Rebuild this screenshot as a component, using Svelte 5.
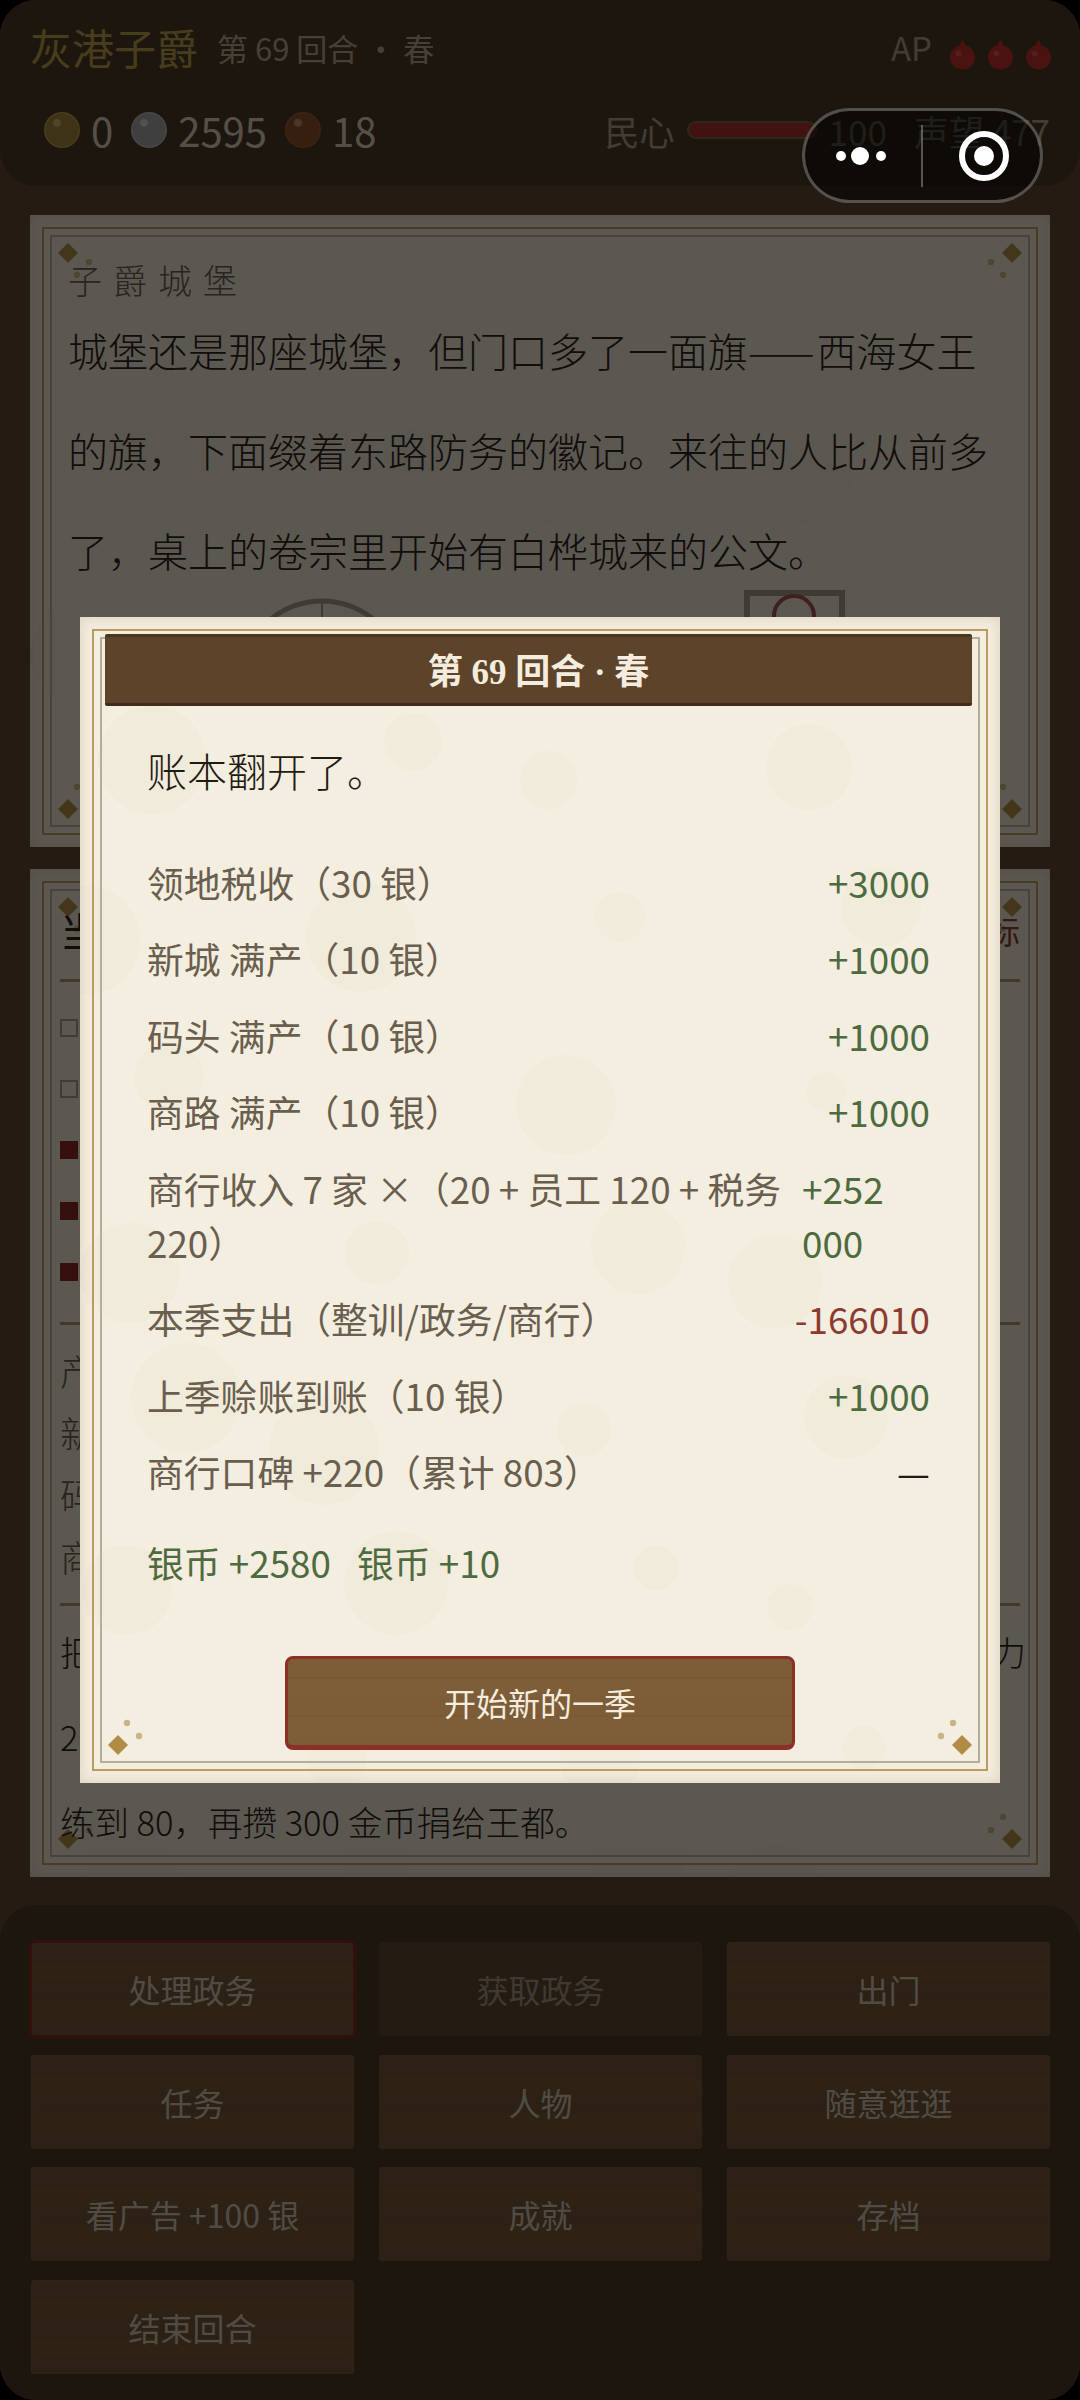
<script>
	const blots = [
		[152, 760, 54], [413, 742, 29], [549, 780, 29], [809, 767, 43], [361, 937, 55], [620, 917, 25],
		[881, 907, 40], [85, 940, 55], [169, 1077, 35], [566, 1105, 50], [826, 1092, 20], [130, 1273, 50],
		[377, 1253, 32], [638, 1247, 47], [775, 1282, 47], [186, 1398, 55], [324, 1450, 55], [584, 1430, 27],
		[846, 1417, 42], [396, 1583, 52], [656, 1568, 22], [790, 1607, 23], [127, 1590, 45], [864, 1747, 22],
		[337, 1760, 30], [600, 1760, 40]
	];
	const modalBlots = blots.map(([x, y, r]) => [x - 80, y - 617, r]);
	const card1Blots = blots.slice(0, 12).map(([x, y, r]) => [x - 30, y - 500, r]);
	const card2Blots = blots.slice(8).map(([x, y, r]) => [x - 30, y - 260, r]);

	const ledger = [
		{ label: '领地税收（30 银）', value: '+3000', tone: 'up' },
		{ label: '新城 满产（10 银）', value: '+1000', tone: 'up' },
		{ label: '码头 满产（10 银）', value: '+1000', tone: 'up' },
		{ label: '商路 满产（10 银）', value: '+1000', tone: 'up' },
		{ label: '商行收入 7 家 ×（20 + 员工 120 + 税务 220）', value: '+252 000', tone: 'up', wrap: true },
		{ label: '本季支出（整训/政务/商行）', value: '-166010', tone: 'down' },
		{ label: '上季赊账到账（10 银）', value: '+1000', tone: 'up' },
		{ label: '商行口碑 +220（累计 803）', value: '—', tone: 'flat' }
	];

	const actions = [
		{ label: '处理政务', hot: true },
		{ label: '获取政务', off: true },
		{ label: '出门' },
		{ label: '任务' },
		{ label: '人物' },
		{ label: '随意逛逛' },
		{ label: '看广告 +100 银' },
		{ label: '成就' },
		{ label: '存档' },
		{ label: '结束回合' }
	];

	const goals = [false, false, true, true, true];
	const coins = [
		{ kind: 'gold', n: 0 },
		{ kind: 'silver', n: 2595 },
		{ kind: 'copper', n: 18 }
	];
	const corners = ['tl', 'tr', 'bl', 'br'];
</script>

{#snippet paper(list)}
	<div class="blots" aria-hidden="true">
		{#each list as [x, y, r]}
			<span style="left: {x - r}px; top: {y - r}px; width: {r * 2}px; height: {r * 2}px"></span>
		{/each}
	</div>
	<i class="line-a"></i>
	<i class="line-b"></i>
	{#each corners as c}
		<svg class="corner {c}" width="80" height="80" viewBox="0 0 80 80" aria-hidden="true">
			<path d="M38 28l10 10-10 10-10-10z" fill="#b08c45" />
			<circle cx="47" cy="60" r="3.2" fill="#c9b48a" />
			<circle cx="59" cy="47" r="3.2" fill="#c9b48a" />
		</svg>
	{/each}
{/snippet}

<div class="page">
	<header class="top">
		<div class="top-a">
			<h1>灰港子爵</h1>
			<span class="turn">第 69 回合 · 春</span>
			<span class="ap">AP</span>
			<div class="drops">
				{#each [0, 1, 2] as i (i)}
					<svg width="27" height="32" viewBox="0 0 27 32">
						<path d="M13.5 1L16.5 7.4C22 8.6 26 13.4 26 19 26 26 20.5 31.5 13.5 31.5S1 26 1 19C1 13.4 5 8.6 10.5 7.4z" fill="#bf3029" />
						<circle cx="9.5" cy="15.5" r="3" fill="#d5574c" />
					</svg>
				{/each}
			</div>
		</div>
		<div class="top-b">
			{#each coins as c}
				<i class="coin {c.kind}"></i><span class="num">{c.n}</span>
			{/each}
			<span class="grow"></span>
			<span class="stat">民心</span>
			<span class="bar"><i></i></span>
			<span class="stat wide">100</span>
			<span class="stat far">声望 477</span>
		</div>
	</header>

	<main>
		<section class="card first">
			{@render paper(card1Blots)}
			<h2>子爵城堡</h2>
			<p class="story">城堡还是那座城堡，但门口多了一面旗<span class="dash">——</span>西海女王的旗，下面缀着东路防务的徽记。来往的人比从前多了，桌上的卷宗里开始有白桦城来的公文。</p>
			<svg class="scene" width="900" height="200" viewBox="0 0 900 200" aria-hidden="true">
				<circle cx="254" cy="93" r="82" fill="none" stroke="#a09789" stroke-width="5" />
				<path d="M254 11v164" stroke="#a09789" stroke-width="2" />
				<rect x="679" y="3" width="95" height="150" fill="none" stroke="#a09789" stroke-width="6" />
				<circle cx="726" cy="26" r="20" fill="none" stroke="#a0564e" stroke-width="4" />
			</svg>
		</section>

		<section class="card second">
			{@render paper(card2Blots)}
			<div class="goal-head"><h3>当前目标</h3><span>查看目标</span></div>
			<ul class="goals">
				{#each goals as done}
					<li><i class:done></i>目标条目</li>
				{/each}
			</ul>
			<ul class="lands">
				<li>产业概况</li>
				<li>新城 满产</li>
				<li>码头 满产</li>
				<li>商路 满产</li>
			</ul>
			<p class="plan">把新城、码头、商路都升到满产，把商行开到十家，让部队战力<br />200 人以上，把领地声望提到五百，把主角的剑术<br />练到 80，再攒 300 金币捐给王都。</p>
		</section>
	</main>

	<footer class="actions">
		{#each actions as a}
			<button class="wood" class:hot={a.hot} class:off={a.off}>{a.label}</button>
		{/each}
	</footer>
</div>

<div class="scrim">
	<div class="modal">
		{@render paper(modalBlots)}
		<div class="modal-title">第 69 回合 · 春</div>
		<p class="lead">账本翻开了。</p>
		<div class="rows">
			{#each ledger as row}
				<div class="row" class:wrap={row.wrap}>
					<span class="what">{row.label}</span>
					<span class="val {row.tone}">{row.value}</span>
				</div>
			{/each}
		</div>
		<div class="sum"><span>银币 +2580</span><span>银币 +10</span></div>
		<button class="start">开始新的一季</button>
	</div>
</div>

<div class="capsule" aria-hidden="true">
	<span class="dots"><i></i><i class="big"></i><i></i></span>
	<span class="split"></span>
	<span class="ring"><i></i></span>
</div>

<style>
	:global(body) {
		margin: 0;
		background: #000;
	}
	* {
		box-sizing: border-box;
	}
	.page,
	.scrim {
		font-family: 'Noto Sans CJK SC', 'Noto Sans', sans-serif;
		font-weight: 400;
	}
	.page {
		width: 1080px;
		height: 2400px;
		display: flex;
		flex-direction: column;
		background: #5f4632;
		border-radius: 36px;
		overflow: hidden;
	}
	h1,
	h2,
	h3,
	p,
	ul {
		margin: 0;
		padding: 0;
		font-weight: 300;
		list-style: none;
	}

	.top {
		height: 186px;
		background: #4b3925;
		border-radius: 0 0 36px 36px;
		padding: 18px 30px 0;
	}
	.top-a {
		display: flex;
		align-items: center;
		height: 58px;
	}
	h1 {
		font-size: 42px;
		line-height: 58px;
		font-weight: 400;
		color: #b89a48;
	}
	.turn {
		margin-left: 19px;
		font-size: 31px;
		color: #b3a68e;
	}
	.ap {
		margin-left: auto;
		font-size: 33px;
		color: #a89c86;
	}
	.drops {
		display: flex;
		gap: 11px;
		margin: 14px -2px 0 17px;
	}
	.top-b {
		display: flex;
		align-items: center;
		height: 50px;
		margin-top: 29px;
		padding-left: 14px;
		font-size: 40px;
	}
	.coin {
		width: 36px;
		height: 36px;
		border-radius: 50%;
	}
	.coin.gold {
		background: radial-gradient(circle at 36% 30%, #cdb66e 0 9%, transparent 14%),
			radial-gradient(circle, #a0853a 0 62%, #b89c4c 68%);
	}
	.coin.silver {
		background: radial-gradient(circle at 36% 30%, #d0d0d0 0 9%, transparent 14%),
			radial-gradient(circle, #a3a3a3 0 62%, #b8b8b8 68%);
	}
	.coin.copper {
		background: radial-gradient(circle at 36% 30%, #c09070 0 9%, transparent 14%),
			radial-gradient(circle, #8a5128 0 62%, #9c5a2c 68%);
	}
	.num {
		margin: 0 18px 0 11px;
		color: #dbcfb8;
	}
	.grow {
		flex: 1;
	}
	.stat {
		font-size: 35px;
		color: #a89c86;
	}
	.stat.wide {
		margin-left: 12px;
	}
	.stat.far {
		margin-left: 27px;
	}
	.bar {
		width: 130px;
		height: 18px;
		margin-left: 12px;
		padding: 2px;
		background: #7a6248;
		border-radius: 9px;
	}
	.bar i {
		display: block;
		height: 100%;
		background: #a8322a;
		border-radius: 7px;
	}

	main {
		padding: 29px 30px 0;
		display: flex;
		flex-direction: column;
		gap: 22px;
	}
	.card {
		position: relative;
		overflow: hidden;
		background: #ebe1d1;
		box-shadow: inset 0 0 14px rgba(160, 130, 85, 0.28);
		color: #2e261c;
	}
	.card > :not(.blots, .line-a, .line-b, .corner) {
		position: relative;
	}
	.blots {
		position: absolute;
		inset: 0;
		pointer-events: none;
	}
	.blots span {
		position: absolute;
		border-radius: 50%;
		background: rgba(125, 105, 70, 0.02);
	}
	.line-a,
	.line-b {
		position: absolute;
		pointer-events: none;
	}
	.line-a {
		inset: 12px;
		border: 2px solid #b99c5e;
	}
	.line-b {
		inset: 20px;
		border: 2px solid #b5ae9e;
	}
	.corner {
		position: absolute;
	}
	.tl {
		left: 0;
		top: 0;
	}
	.tr {
		right: 0;
		top: 0;
		transform: scaleX(-1);
	}
	.bl {
		left: 0;
		bottom: 0;
		transform: scaleY(-1);
	}
	.br {
		right: 0;
		bottom: 0;
		transform: scale(-1);
	}

	.first {
		height: 632px;
		padding: 45px 38px 0;
	}
	h2 {
		font-size: 34px;
		line-height: 40px;
		letter-spacing: 11px;
		color: #6a5e4e;
	}
	.story {
		font-size: 40px;
		line-height: 100px;
		width: 930px;
	}
	.dash {
		letter-spacing: 2px;
	}
	.scene {
		display: block;
		margin-top: -10px;
	}

	.second {
		height: 1008px;
		padding: 36px 30px 0;
	}
	.goal-head {
		display: flex;
		justify-content: space-between;
		align-items: center;
		height: 50px;
		border: 0;
	}
	h3 {
		font-size: 40px;
		line-height: 50px;
		font-weight: 400;
	}
	.goal-head span {
		font-size: 32px;
		color: #8c3b30;
	}
	.goals {
		margin-top: 24px;
		padding: 15px 0 20px;
		border-top: 3px solid #a89467;
		border-bottom: 3px solid #a89467;
	}
	.goals li {
		display: flex;
		align-items: center;
		gap: 16px;
		height: 61px;
		font-size: 32px;
	}
	.goals i {
		width: 18px;
		height: 18px;
		border: 2px solid #a39a8c;
	}
	.goals i.done {
		background: #8c2a22;
		border-color: #8c2a22;
	}
	.lands {
		padding: 14px 0 16px;
		border-bottom: 3px solid #a89467;
	}
	.lands li {
		font-size: 36px;
		line-height: 62px;
		color: #6a5e4e;
	}
	.plan {
		margin-top: 3px;
		font-size: 34.5px;
		line-height: 85px;
		white-space: nowrap;
	}

	.actions {
		margin-top: auto;
		height: 495px;
		padding: 37px 30px 0 31px;
		background: #4c3a26;
		border-radius: 36px 36px 0 0;
		display: grid;
		grid-template-columns: repeat(3, 1fr);
		grid-auto-rows: 94px;
		gap: 18.5px 25px;
	}
	.wood,
	.start {
		font-family: inherit;
		font-size: 32px;
		background: repeating-linear-gradient(180deg, #7d5c38 0 18px, #795a36 18px 20px, #7e5d39 20px 38px);
		border: 0;
		padding: 0;
	}
	.wood {
		color: #cdc3b1;
		border-radius: 4px;
		background: repeating-linear-gradient(180deg, #75573a 0 18px, #71543a 18px 20px, #765838 20px 38px);
		box-shadow: inset 0 0 3px #7f6240;
	}
	.wood.hot {
		outline: 3px solid #7f2a23;
		outline-offset: -1px;
	}
	.wood.off {
		color: #a09480;
		background: #5e4a30;
		box-shadow: none;
	}

	.scrim {
		position: fixed;
		inset: 0;
		display: flex;
		align-items: center;
		justify-content: center;
		background: rgba(0, 0, 0, 0.61);
	}
	.modal {
		position: relative;
		overflow: hidden;
		width: 920px;
		height: 1166px;
		padding: 17px 28px 0 25px;
		background: #f4eee0;
		box-shadow: inset 0 0 14px rgba(160, 130, 85, 0.28);
		display: flex;
		flex-direction: column;
	}
	.modal > :not(.blots, .line-a, .line-b, .corner) {
		position: relative;
	}
	.modal-title {
		height: 72px;
		line-height: 71px;
		text-align: center;
		font-size: 35px;
		font-weight: 700;
		font-family: 'Liberation Serif', 'Noto Sans CJK SC', serif;
		color: #f3ecdf;
		background: #5c4329;
		border-top: 3px solid #4a3520;
		border-bottom: 3px solid #3f2c19;
		border-radius: 2px;
	}
	.lead {
		margin: 34px 0 0 42px;
		font-size: 40px;
		line-height: 60px;
		color: #1f1a12;
	}
	.rows {
		margin: 55px 0 0 42px;
		width: 783px;
	}
	.row {
		display: flex;
		gap: 12px;
		margin-bottom: 22px;
		font-size: 36.8px;
		line-height: 54.4px;
		color: #6a5e4e;
	}
	.what {
		flex: 1;
		min-width: 0;
	}
	.val {
		flex: none;
	}
	.wrap .val {
		width: 128px;
	}
	.up {
		color: #4e6b3f;
	}
	.down {
		color: #8c3b30;
	}
	.flat {
		color: #1f1a12;
	}
	.sum {
		display: flex;
		gap: 26px;
		margin: 14px 0 0 42px;
		font-size: 36.8px;
		line-height: 54px;
		color: #4e6b3f;
	}
	.start {
		align-self: center;
		width: 510px;
		height: 94px;
		margin-top: 67px;
		margin-left: 3px;
		color: #f3ecdf;
		border-radius: 8px;
		border: 3px solid #8c2f27;
		border-bottom-width: 5px;
	}

	.capsule {
		position: fixed;
		left: 802px;
		top: 108px;
		width: 241px;
		height: 95px;
		border-radius: 48px;
		border: 3px solid rgba(255, 255, 255, 0.28);
		background: rgba(0, 0, 0, 0.5);
		display: flex;
		align-items: center;
	}
	.dots {
		display: flex;
		align-items: center;
		gap: 5px;
		margin-left: 31px;
		width: 85px;
	}
	.dots i {
		width: 10px;
		height: 10px;
		border-radius: 50%;
		background: #fff;
	}
	.dots i.big {
		width: 18px;
		height: 18px;
		margin-right: 2px;
	}
	.split {
		width: 2px;
		height: 62px;
		background: rgba(255, 255, 255, 0.3);
	}
	.ring {
		width: 50px;
		height: 50px;
		margin-left: 36px;
		border: 6px solid #fff;
		border-radius: 50%;
		display: flex;
		align-items: center;
		justify-content: center;
	}
	.ring i {
		width: 20px;
		height: 20px;
		border-radius: 50%;
		background: #fff;
	}
</style>
